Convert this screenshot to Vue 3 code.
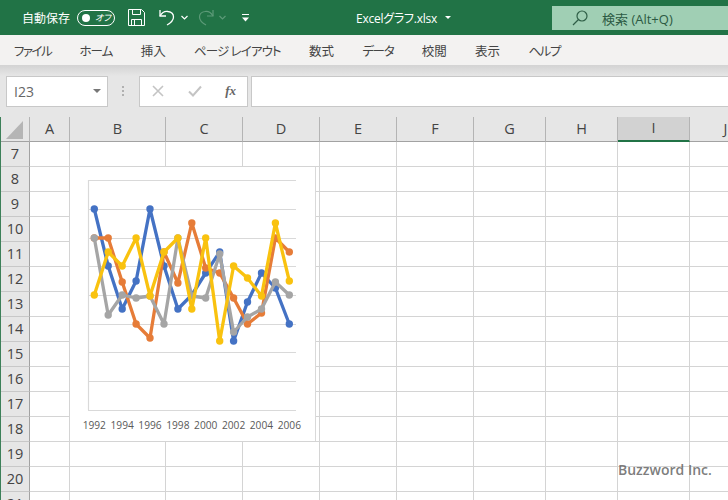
<template>
  <div class="page">
    <!-- タイトルバー -->
    <header class="titlebar">
      <span class="autosave">自動保存</span>
      <span class="toggle"><i class="knob"></i><em>オフ</em></span>
      <svg class="ico save" width="17" height="17" viewBox="0 0 17 17" fill="none" stroke="#fff" stroke-width="1">
        <path d="M.5.5h13l3 3v13H.5z" />
        <path d="M4.5.5v5h8v-5M3.5 16.5v-6h10v6M6.5 11v5.500" />
      </svg>
      <svg class="ico undo" width="16" height="17" viewBox="0 0 16 17" fill="none" stroke="#fff" stroke-width="1.3">
        <path d="M1 1v6h6" />
        <path d="M1 7C3 3.500 6 2 9 2.500c3.500.5 5.500 3 5.500 5.500 0 3-2 5.500-6.500 8" />
      </svg>
      <svg class="ico chev" width="7" height="5" viewBox="0 0 7 5" fill="none" stroke="#fff" stroke-width="1.2"><path d="M.5 1l3 3 3-3" /></svg>
      <svg class="ico redo" width="16" height="17" viewBox="0 0 16 17" fill="none" stroke="#5c9a78" stroke-width="1.2">
        <path d="M15 1v6H9" />
        <path d="M15 7C13 3.500 10 2 7 2.500 3.500 3 1.500 5.500 1.500 8c0 3 2 5.500 6.500 8" />
      </svg>
      <svg class="ico chev2" width="7" height="5" viewBox="0 0 7 5" fill="none" stroke="#5c9a78" stroke-width="1.2"><path d="M.5 1l3 3 3-3" /></svg>
      <svg class="ico custom" width="9" height="8" viewBox="0 0 9 8"><path d="M1 .5h7" stroke="#fff" fill="none" /><path d="M1 3.500h7L4.500 7.500z" fill="#fff" /></svg>
      <span class="filename">Excelグラフ.xlsx</span>
      <span class="file-caret"></span>
      <div class="search">
        <svg width="16" height="16" viewBox="0 0 16 16" fill="none" stroke="#2f5f47" stroke-width="1.2">
          <circle cx="10" cy="6" r="5" /><path d="M6.500 9.500L1 15" />
        </svg>
        <span>検索 (Alt+Q)</span>
      </div>
    </header>

    <!-- リボンのタブ -->
    <nav class="ribbon">
      <span v-for="tab in tabs" :key="tab.label" :style="{ letterSpacing: tab.tight + 'px' }">{{ tab.label }}</span>
    </nav>

    <!-- 数式バー -->
    <div class="formula">
      <div class="namebox"><span>I23</span><i class="caret"></i></div>
      <div class="grip"><i></i><i></i><i></i></div>
      <div class="fx-buttons">
        <svg width="12" height="12" viewBox="0 0 12 12" fill="none" stroke="#c4c4c4" stroke-width="1.600"><path d="M1 1l10 10M11 1L1 11" /></svg>
        <svg width="14" height="12" viewBox="0 0 14 12" fill="none" stroke="#c4c4c4" stroke-width="2"><path d="M1 6.500l4 4 8-9" /></svg>
        <span class="fx">fx</span>
      </div>
      <div class="input"></div>
    </div>

    <!-- シート -->
    <div class="sheet">
      <div class="grid">
        <div class="head corner"><i></i></div>
        <div v-for="c in cols" :key="c" class="head" :class="{ sel: c === 'I' }">{{ c }}</div>
        <template v-for="r in rows" :key="r">
          <div class="rowhead">{{ r }}</div>
          <div v-for="c in cols" :key="c" class="cell"></div>
        </template>
      </div>

      <!-- グラフ -->
      <div class="chart">
        <svg width="245" height="274" viewBox="0 1 245 274">
          <line v-for="y in gridYs" :key="y" x1="18" x2="226" :y1="y" :y2="y" class="gridline" />
          <line x1="18.500" x2="18.500" y1="14" y2="244" class="gridline" />
          <g v-for="s in series" :key="s.color">
            <polyline :points="s.points.map(p => p.join(',')).join(' ')" :stroke="s.color" fill="none" stroke-width="3.300" stroke-linejoin="round" />
            <circle v-for="(p, i) in s.points" :key="i" :cx="p[0]" :cy="p[1]" r="3.700" :fill="s.color" />
          </g>
          <text v-for="l in labels" :key="l.t" :x="l.x" y="263" class="axis">{{ l.t }}</text>
        </svg>
      </div>

      <div class="mark">Buzzword Inc.</div>
    </div>
  </div>
</template>

<script setup>
const tabs = [
  { label: 'ファイル', tight: -1.5 },
  { label: 'ホーム', tight: -1 },
  { label: '挿入', tight: 0 },
  { label: 'ページ レイアウト', tight: -0.9 },
  { label: '数式', tight: 0 },
  { label: 'データ', tight: -1.3 },
  { label: '校閲', tight: 0 },
  { label: '表示', tight: 0 },
  { label: 'ヘルプ', tight: -1.3 }
]
const cols = ['A', 'B', 'C', 'D', 'E', 'F', 'G', 'H', 'I', 'J']
const rows = [7, 8, 9, 10, 11, 12, 13, 14, 15, 16, 17, 18, 19, 20, 21]

// グラフの値は画面上のy座標で持っている
const raw = [
  ['#4472c4', [209, 266, 309, 281, 209, 266, 309, 295, 273, 252, 341, 302, 273, 288, 324]],
  ['#e67c38', [238, 238, 282, 324, 338, 252, 283, 223, 268, 273, 298, 324, 313, 238, 252]],
  ['#a5a5a5', [238, 315, 295, 298, 296, 324, 238, 296, 298, 254, 332, 317, 309, 282, 295]],
  ['#f9c20f', [295, 252, 266, 238, 296, 252, 238, 309, 238, 341, 266, 278, 296, 223, 281]]
]
const px = i => 24.3 + i * 13.93
const series = raw.map(([color, ys]) => ({
  color,
  points: ys.map((y, i) => [px(i).toFixed(1), y - 166])
}))
const gridYs = [14.5, 43.5, 72.5, 100.5, 129.5, 158.5, 186.5, 215.5, 244.5]
const labels = [0, 2, 4, 6, 8, 10, 12, 14].map(i => ({ t: String(1992 + i), x: px(i) }))
</script>

<style>
html,
body {
  margin: 0;
  background: #fff;
}
</style>

<style scoped>
.page {
  width: 728px;
  height: 500px;
  overflow: hidden;
  font-family: "Open Sans", "Noto Sans CJK JP", sans-serif;
  color: #444;
}

/* タイトルバー */
.titlebar {
  display: flex;
  align-items: center;
  height: 35px;
  background: #217346;
  color: #fff;
  font-size: 12px;
}
.autosave {
  margin-left: 22px;
  width: 48px;
}
.toggle {
  display: flex;
  align-items: center;
  box-sizing: border-box;
  width: 38px;
  height: 16px;
  margin-left: 7px;
  border: 1px solid #fff;
  border-radius: 8px;
}
.knob {
  width: 8px;
  height: 8px;
  margin-left: 4px;
  border-radius: 50%;
  background: #fff;
}
.toggle em {
  margin-left: 5px;
  font-size: 9px;
  line-height: 1;
  white-space: nowrap;
  font-feature-settings: "palt";
}
.ico {
  flex: none;
}
.save {
  margin-left: 13px;
}
.undo {
  margin-left: 14px;
}
.chev {
  margin-left: 6px;
}
.redo {
  margin-left: 10px;
}
.chev2 {
  margin-left: 5px;
}
.custom {
  margin-left: 15px;
}
.filename {
  margin-left: 106px;
  letter-spacing: -0.25px;
  font-feature-settings: "palt";
  white-space: nowrap;
}
.file-caret {
  margin-left: 8px;
  border-left: 3px solid transparent;
  border-right: 3px solid transparent;
  border-top: 3px solid #fff;
}
.search {
  position: absolute;
  left: 552px;
  top: 6px;
  display: flex;
  align-items: center;
  gap: 14px;
  box-sizing: border-box;
  width: 176px;
  height: 24px;
  padding-left: 20px;
  background: #a0cfb4;
  color: #2c5a43;
  font-size: 13px;
  white-space: nowrap;
}

/* リボン */
.ribbon {
  display: flex;
  align-items: center;
  gap: 28.300px;
  box-sizing: border-box;
  height: 30px;
  padding-left: 14px;
  background: #f3f2f1;
  font-size: 12.500px;
  font-feature-settings: "palt";
  white-space: nowrap;
}

/* 数式バー */
.formula {
  display: flex;
  align-items: center;
  box-sizing: border-box;
  height: 52px;
  padding: 11px 0 11px 6px;
  background: linear-gradient(#d3d3d3, #e6e6e6 11px);
}
.namebox,
.fx-buttons,
.input {
  display: flex;
  align-items: center;
  box-sizing: border-box;
  height: 31px;
  background: #fff;
  border: 1px solid #c8c8c8;
}
.namebox {
  justify-content: space-between;
  width: 102px;
  padding: 0 6px 0 7px;
  color: #666;
  font-size: 14px;
}
.caret {
  border-left: 4px solid transparent;
  border-right: 4px solid transparent;
  border-top: 4px solid #777;
}
.grip {
  display: flex;
  flex-direction: column;
  gap: 2px;
  margin: 0 15px 0 14px;
}
.grip i {
  width: 2px;
  height: 2px;
  background: #b0b0b0;
}
.fx-buttons {
  justify-content: space-between;
  width: 109px;
  padding: 0 11px 0 12px;
}
.fx {
  color: #666;
  font-family: "Liberation Serif", serif;
  font-style: italic;
  font-weight: 700;
  font-size: 13px;
}
.input {
  flex: 1;
  margin-left: 3px;
  border-right: none;
}

/* シート */
.sheet {
  position: relative;
  border-left: 1px solid #3d8059;
}
.grid {
  display: grid;
  grid-template-columns: 29px 40px 96px 77px 77px 77px 77px 72px 72px 72px 72px;
  grid-auto-rows: 25px;
}
.head,
.rowhead {
  display: flex;
  align-items: center;
  justify-content: center;
  box-sizing: border-box;
  background: #e6e6e6;
  color: #444;
  font-size: 14.500px;
}
.head {
  padding-bottom: 2px;
  border-right: 1px solid #b4b4b4;
  border-bottom: 1px solid #a2a2a2;
}
.corner i {
  width: 0;
  height: 0;
  margin: 4px 0 0 -2px;
  border-left: 17px solid transparent;
  border-bottom: 18px solid #b5b5b5;
}
.sel {
  background: #d2d2d2;
  border-bottom: 2px solid #217346;
}
.rowhead {
  padding-bottom: 1px;
  border-right: 1px solid #a2a2a2;
  border-bottom: 1px solid #c8c8c8;
}
.cell {
  box-sizing: border-box;
  border-right: 1px solid #d4d4d4;
  border-bottom: 1px solid #d4d4d4;
}

.chart {
  position: absolute;
  left: 69px;
  top: 50px;
  width: 245px;
  height: 274px;
  background: #fff;
  border-right: 1px solid #d9d9d9;
}
.chart svg {
  display: block;
}
.gridline {
  stroke: #d9d9d9;
  stroke-width: 1.200;
}
.axis {
  fill: #595959;
  font-family: "Open Sans", sans-serif;
  font-size: 10.200px;
  text-anchor: middle;
}
.mark {
  position: absolute;
  left: 617px;
  top: 343px;
  color: rgba(90, 90, 90, 0.8);
  font-size: 14px;
  font-weight: 600;
  white-space: nowrap;
}
</style>
